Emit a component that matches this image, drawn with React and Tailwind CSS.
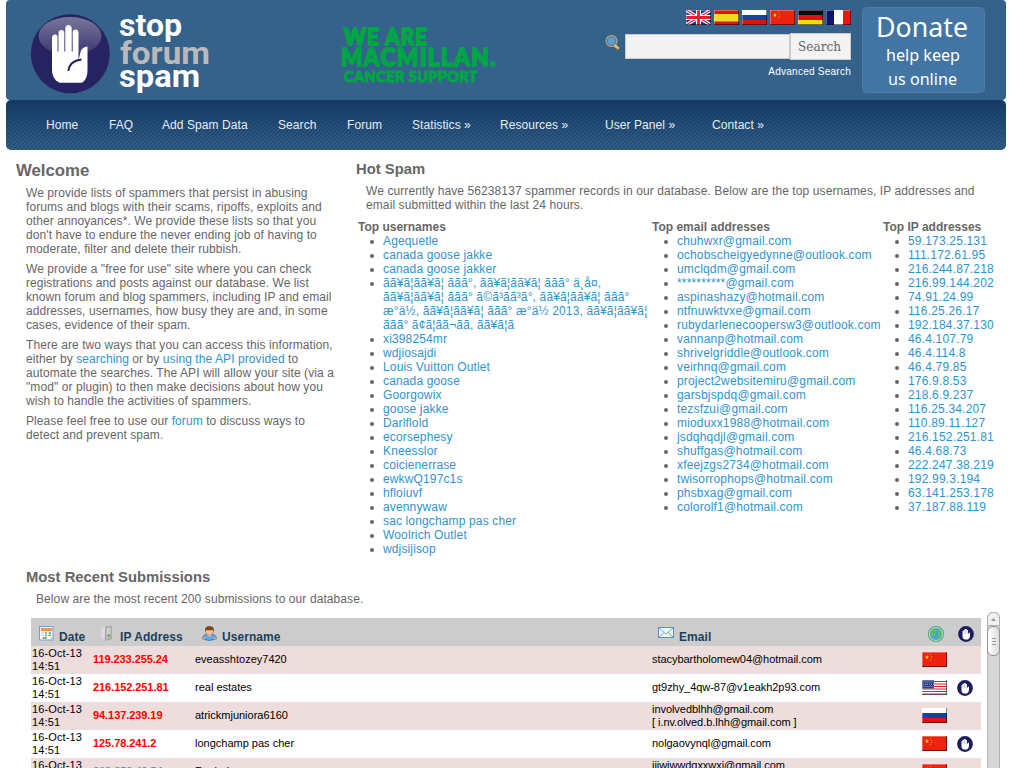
import React from 'react';

const navItems = [
  { label: 'Home', width: 'w-[63px]' },
  { label: 'FAQ', width: 'w-[53px]' },
  { label: 'Add Spam Data', width: 'w-[116px]' },
  { label: 'Search', width: 'w-[69px]' },
  { label: 'Forum', width: 'w-[65px]' },
  { label: 'Statistics »', width: 'w-[88px]' },
  { label: 'Resources »', width: 'w-[105px]' },
  { label: 'User Panel »', width: 'w-[107px]' },
  { label: 'Contact »', width: 'w-[80px]' },
];

const usernames = [
  'Agequetle', 'canada goose jakke', 'canada goose jakker',
  ['ãã¥ã¦ãã¥ã¦ ããã°, ãã¥ã¦ãã¥ã¦ ããã° ä¸å¤,', 'ãã¥ã¦ãã¥ã¦ ããã° ã©ã³ãã³ã°, ãã¥ã¦ãã¥ã¦ ããã°', 'æ°ä½, ãã¥ã¦ãã¥ã¦ ããã° æ°ä½ 2013, ãã¥ã¦ãã¥ã¦', 'ããã° ã¢ã¦ãã¬ãã, ãã¥ã¦ã'],
  'xi398254mr', 'wdjiosajdi', 'Louis Vuitton Outlet', 'canada goose', 'Goorgowix',
  'goose jakke', 'Darlflold', 'ecorsephesy', 'Kneesslor', 'coicienerrase',
  'ewkwQ197c1s', 'hfloiuvf', 'avennywaw', 'sac longchamp pas cher',
  'Woolrich Outlet', 'wdjsijisop',
];

const emails = [
  'chuhwxr@gmail.com', 'ochobscheigyedynne@outlook.com', 'umclqdm@gmail.com',
  '**********@gmail.com', 'aspinashazy@hotmail.com', 'ntfnuwktvxe@gmail.com',
  'rubydarlenecoopersw3@outlook.com', 'vannanp@hotmail.com', 'shrivelgriddle@outlook.com',
  'veirhnq@gmail.com', 'project2websitemiru@gmail.com', 'garsbjspdq@gmail.com',
  'tezsfzui@gmail.com', 'mioduxx1988@hotmail.com', 'jsdqhqdjl@gmail.com',
  'shuffgas@hotmail.com', 'xfeejzgs2734@hotmail.com', 'twisorrophops@hotmail.com',
  'phsbxag@gmail.com', 'colorolf1@hotmail.com',
];

const ips = [
  '59.173.25.131', '111.172.61.95', '216.244.87.218', '216.99.144.202', '74.91.24.99',
  '116.25.26.17', '192.184.37.130', '46.4.107.79', '46.4.114.8', '46.4.79.85',
  '176.9.8.53', '218.6.9.237', '116.25.34.207', '110.89.11.127', '216.152.251.81',
  '46.4.68.73', '222.247.38.219', '192.99.3.194', '63.141.253.178', '37.187.88.119',
];

const submissions = [
  { ip: '119.233.255.24', name: 'eveasshtozey7420', email: ['stacybartholomew04@hotmail.com'], flag: 'cn' },
  { ip: '216.152.251.81', name: 'real estates', email: ['gt9zhy_4qw-87@v1eakh2p93.com'], flag: 'us', hand: true },
  { ip: '94.137.239.19', name: 'atrickmjuniora6160', email: ['involvedblhh@gmail.com', '[ i.nv.olved.b.lhh@gmail.com ]'], flag: 'ru' },
  { ip: '125.78.241.2', name: 'longchamp pas cher', email: ['nolgaovynql@gmail.com'], flag: 'cn', hand: true },
  { ip: '202.252.43.54', name: 'Rachel', email: ['jijwjwwdgxxwxj@gmail.com', '[ jijwjwwdgxxwxj@gmail.com ]'], flag: 'cn', blue: true },
];

const star = '5,3 5.6,4.5 7,4.5 5.9,5.5 6.3,7 5,6.1 3.7,7 4.1,5.5 3,4.5 4.4,4.5';

const flagArt = {
  gb: (
    <>
      <rect width="25" height="15" fill="#26348c" />
      <path d="M0 0 25 15M25 0 0 15" stroke="#fff" strokeWidth="3.4" />
      <path d="M0 0 25 15M25 0 0 15" stroke="#dd2036" strokeWidth="1.2" />
      <path d="M12.5 0V15M0 7.5H25" stroke="#fff" strokeWidth="5" />
      <path d="M12.5 0V15M0 7.5H25" stroke="#e01f30" strokeWidth="2.8" />
    </>
  ),
  es: (
    <>
      <rect width="25" height="15" fill="#dc1414" />
      <rect y="4" width="25" height="7.5" fill="#f0dc1e" />
    </>
  ),
  ru: (
    <>
      <rect width="25" height="15" fill="#fff" />
      <rect y="5" width="25" height="5" fill="#1243a0" />
      <rect y="10" width="25" height="5" fill="#dc1410" />
    </>
  ),
  cn: (
    <>
      <rect width="25" height="15" fill="#ee2211" />
      <polygon points={star} fill="#ffe600" />
      <path d="M8 2.5h1M9 4.5h1M9 6.5h1M8 8.5h1" stroke="#f6b010" strokeOpacity=".7" />
    </>
  ),
  de: (
    <>
      <rect width="25" height="15" fill="#0a0a0a" />
      <rect y="5" width="25" height="5" fill="#e01010" />
      <rect y="10" width="25" height="5" fill="#fadc14" />
    </>
  ),
  fr: (
    <>
      <rect width="25" height="15" fill="#fff" />
      <rect width="8" height="15" fill="#10186e" />
      <rect x="17" width="8" height="15" fill="#f01414" />
    </>
  ),
  us: (
    <>
      <rect width="25" height="15" fill="#fff" />
      <path d="M0 1.5H25M0 4H25M0 6.5H25M0 9H25M0 11.5H25M0 14H25" stroke="#d8202c" strokeWidth="1.2" />
      <rect width="12" height="8.5" fill="#2a3a80" />
      <path d="M1.5 2H12M1 4.3H12M1.5 6.6H12" stroke="#aab4d8" strokeWidth="1" strokeDasharray="1 1" />
    </>
  ),
};

const Flag = ({ code }) => (
  <svg className="w-[25px] h-[15px] block" viewBox="0 0 25 15">
    {flagArt[code]}
    <path d="M0 .5H25M.5 0V15" stroke="#fff" strokeOpacity=".3" />
    <path d="M0 14.5H25M24.5 0V15" stroke="#000" strokeOpacity=".5" />
  </svg>
);

const BigHand = () => (
  <svg className="w-20 h-20 shrink-0" viewBox="0 0 80 80">
    <defs>
      <linearGradient id="gloss" x1="0" y1="0" x2="0" y2="1">
        <stop offset="0" stopColor="#77779b" />
        <stop offset="1" stopColor="#3b3670" />
      </linearGradient>
    </defs>
    <circle cx="40.300" cy="39.700" r="39.500" fill="#272262" />
    <ellipse cx="40" cy="22" rx="31.500" ry="19" fill="url(#gloss)" />
    <path
      d="M22 24q.2-3 2.700-3.400t2.800 2V37.500h1V19q.2-3 2.900-3t2.900 3V37.500h1V14.500q.2-3.500 3.200-3.500t3.200 3.500V37.500h1V18.500q.2-3 2.900-3t2.900 3V46l2-8q1.200-5 7-5.500V56q0 7.500-3.800 11.500l-2 1.300H29.500L26 66.500Q22 62 22 56Z"
      fill="#fff"
    />
    <path d="M51.500 45.500Q39.500 47 38.300 57" fill="none" stroke="#272262" strokeWidth="1.800" />
  </svg>
);

const SmallHand = () => (
  <svg className="w-4 h-4 block" viewBox="0 0 16 16">
    <circle cx="8" cy="8" r="7.900" fill="#1d1d5c" />
    <path d="M4.500 5h1V4h1.200V3h2v1H10v4.500l.8-1.700h1.200V10q-.3 3.200-2 3.400H6.500q-2-.6-2-3Z" fill="#fff" />
    <path d="M6 4.500V8M7.500 4V8M9 4.500V8" stroke="#8a8ab0" strokeWidth=".4" />
  </svg>
);

const Globe = () => (
  <svg className="w-[17px] h-[17px] block" viewBox="0 0 17 17">
    <circle cx="8" cy="8" r="7.500" fill="#4f9fd0" stroke="#5fae68" strokeWidth="1.200" />
    <circle cx="8" cy="8" r="6.500" fill="none" stroke="#c4ecca" strokeWidth=".9" />
    <path d="M3 5 6.500 2.500 9 4 7 6.500 8 8 5.500 10.500 3 9ZM10 4 12.500 4.500 13.500 8.500 11.500 12 9 11.500 10 8.500Z" fill="#58c25c" />
  </svg>
);

const Calendar = () => (
  <svg className="w-[15px] h-[15px]" viewBox="0 0 15 15">
    <rect x=".5" y=".5" width="13.500" height="13.500" fill="#fff" stroke="#6f9fd8" />
    <rect x="2" y="2" width="11" height="3" fill="#f08a3c" />
    <path d="M5 2v3M8 2v3M11 2v3" stroke="#fbc48c" strokeWidth=".6" />
    <path d="M2.500 7h2.500M2.500 9.500h2.500M2.500 12h2.500" stroke="#c3d2ea" strokeWidth="1.600" />
    <path d="M6 7h2M6 9.500h2M9.500 7h2.500M9.500 9.500h2.500" stroke="#62a562" strokeWidth="1.700" />
    <path d="M4 12h4" stroke="#5fa05f" strokeWidth="1.500" />
    <path d="M10 14 14 10V14Z" fill="#a8c8ee" />
  </svg>
);

const Server = () => (
  <svg className="w-[14px] h-[15px]" viewBox="0 0 14 15">
    <path d="M0 3 5 .5V14L0 11.500Z" fill="#dcdcdc" />
    <path d="M4.500 1 10.300.5V13L4.500 14.300Z" fill="#b9b9b9" stroke="#8d8d8d" strokeWidth=".6" />
    <path d="M6 3h3.500M6 5h3.500M6 7h3.500" stroke="#f1f1f1" strokeWidth=".8" />
    <rect x="7.300" y="8.500" width="1.700" height="2" fill="#4eac42" />
  </svg>
);

const UserIcon = () => (
  <svg className="w-[15px] h-[15px]" viewBox="0 0 15 15">
    <path d="M.7 13Q.5 8.500 5 8.500h5q4.500 0 4.300 4.500-6.800 3-13.600 0Z" fill="#62a8ef" stroke="#2b6bc0" strokeWidth=".8" />
    <path d="M5 8.500 7.500 11 10 8.500Z" fill="#cfe6fb" />
    <circle cx="1.800" cy="12.500" r="1.300" fill="#e8a26c" />
    <circle cx="13.200" cy="12.500" r="1.300" fill="#e8a26c" />
    <ellipse cx="7.500" cy="5.500" rx="3.800" ry="4" fill="#f3bf8e" stroke="#a0683c" strokeWidth=".5" />
    <path d="M3 6Q2.300 0 7.500 0T12 6L10.800 3.800Q6 4.800 4.300 3.800Z" fill="#7c4522" />
  </svg>
);

const Mail = () => (
  <svg className="w-4 h-[11px]" viewBox="0 0 16 11">
    <rect x=".5" y=".5" width="15" height="10" fill="#eef6fe" stroke="#5b8dc8" />
    <path d="M1 1 8 7 15 1M1 10 6 5.500M15 10 10 5.500" fill="none" stroke="#7ba5d8" />
  </svg>
);

const SearchGlass = () => (
  <svg className="w-[15px] h-[15px] mt-0.5 mr-[5px] shrink-0" viewBox="0 0 15 15">
    <path d="M9.500 10 13.500 14" stroke="#edbf70" strokeWidth="3" />
    <path d="M10.500 13 13 15" stroke="#a06a32" strokeWidth="1.200" />
    <circle cx="6.500" cy="6" r="5.300" fill="#659bd0" stroke="#c8a878" strokeWidth="1.400" />
    <circle cx="6.500" cy="6" r="4.400" fill="none" stroke="#365d88" strokeWidth=".7" />
  </svg>
);

const TopList = ({ title, items, className }) => (
  <div className={className}>
    <h3 className="font-bold tracking-normal">{title}</h3>
    <ul className="list-disc pl-[26px]">
      {items.map((item, i) => (
        <li key={i} className="whitespace-nowrap">
          <a href="#" className="inline-block align-top -ml-px text-[#2e94cf]">
            {Array.isArray(item)
              ? item.map((line, n) => <span key={n} className="block">{line}</span>)
              : item}
          </a>
        </li>
      ))}
    </ul>
  </div>
);

const Header = () => (
  <header className="flex h-[100px] bg-[#35628b] rounded-[4px]">
    <div className="flex w-[330px] pl-6 pt-[14px]">
      <BigHand />
      <svg className="w-[100px] h-[86px] ml-1" viewBox="0 0 100 86">
        <g fontFamily="Roboto, 'Liberation Sans', sans-serif" fontWeight="700" fontSize="31">
          <text x="5" y="22" fill="#fff" textLength="63" lengthAdjust="spacingAndGlyphs">stop</text>
          <text x="6" y="49.500" fill="#b9b9bb" textLength="90" lengthAdjust="spacingAndGlyphs">forum</text>
          <text x="5" y="73" fill="#fff" textLength="81" lengthAdjust="spacingAndGlyphs">spam</text>
        </g>
      </svg>
    </div>
    <div className="w-[269px] pt-5">
      <svg className="w-[170px] h-[70px]" viewBox="0 0 170 70">
        <g
          fill="#00a546"
          stroke="#00a546"
          strokeLinejoin="round"
          strokeLinecap="round"
          fontFamily="Lato, 'Open Sans', sans-serif"
          fontWeight="700"
        >
          <text x="8" y="24.500" fontSize="22" strokeWidth="2" letterSpacing="1" textLength="84" lengthAdjust="spacingAndGlyphs">WE ARE</text>
          <text x="5" y="46" fontSize="24" strokeWidth="2" letterSpacing="1.500" textLength="156" lengthAdjust="spacingAndGlyphs">MACMILLAN.</text>
          <text x="8" y="61.500" fontSize="15" strokeWidth="1.200" letterSpacing=".5" textLength="134" lengthAdjust="spacingAndGlyphs">CANCER SUPPORT</text>
        </g>
      </svg>
    </div>
    <div className="w-[246px] pt-[10px] flex flex-col items-end">
      <div className="flex gap-[3px]">
        {['gb', 'es', 'ru', 'cn', 'de', 'fr'].map((code) => <Flag key={code} code={code} />)}
      </div>
      <form className="flex mt-2 items-start">
        <SearchGlass />
        <div className="flex items-center pt-px">
          <input type="text" className="w-[165px] h-[25px] bg-[#f3f3f3] border border-[#ccc] outline-none" />
        </div>
        <button type="button" className="w-[61px] h-[27px] bg-[#f3f3f3] border border-[#ccc]">
          <svg className="w-full h-full font-['DejaVu_Serif',serif]" viewBox="0 0 59 25">
            <text x="7" y="17" fill="#666" fontSize="12.500" textLength="43" lengthAdjust="spacingAndGlyphs">Search</text>
          </svg>
        </button>
      </form>
      <a href="#" className="text-[10px] text-white leading-[12px] mt-1.5 tracking-[0.25px]">Advanced Search</a>
    </div>
    <svg className="w-[123px] h-[86px] mt-[7px] ml-[11px]" viewBox="0 0 123 86">
      <rect x=".5" y=".5" width="122" height="85" rx="4" fill="#4274a4" stroke="#4b7caa" />
      <g fill="#fff" fontFamily="'Noto Sans', 'Open Sans', sans-serif">
        <text x="14" y="30" fontSize="28" textLength="92" lengthAdjust="spacingAndGlyphs">Donate</text>
        <text x="24" y="54" fontSize="17" textLength="74" lengthAdjust="spacingAndGlyphs">help keep</text>
        <text x="26" y="78" fontSize="17" textLength="69" lengthAdjust="spacingAndGlyphs">us online</text>
      </g>
    </svg>
  </header>
);

const Nav = () => (
  <nav className="h-[50px] rounded-[5px] pl-10 flex items-center tracking-[0.07px] text-[#e4edf4] bg-[repeating-linear-gradient(135deg,rgba(0,15,45,0.22)_0px_1.414px,transparent_1.414px_2.828px),linear-gradient(#163f6b,#34628c)]">
    {navItems.map((item) => (
      <a key={item.label} href="#" className={`${item.width} shrink-0 whitespace-nowrap`}>{item.label}</a>
    ))}
  </nav>
);

const Welcome = () => (
  <section className="w-[350px] pl-[10px] pt-[11px]">
    <h2 className="text-[16.8px] leading-5 font-bold">Welcome</h2>
    <div className="pl-[10px] pt-[5px] flex flex-col gap-1.5 whitespace-nowrap tracking-[0.08px]">
      <p>
        We provide lists of spammers that persist in abusing<br />
        forums and blogs with their scams, ripoffs, exploits and<br />
        other annoyances*. We provide these lists so that you<br />
        don't have to endure the never ending job of having to<br />
        moderate, filter and delete their rubbish.
      </p>
      <p>
        We provide a "free for use" site where you can check<br />
        registrations and posts against our database. We list<br />
        known forum and blog spammers, including IP and email<br />
        addresses, usernames, how busy they are and, in some<br />
        cases, evidence of their spam.
      </p>
      <p>
        There are two ways that you can access this information,<br />
        either by <a href="#" className="text-[#2e94cf]">searching</a> or by <a href="#" className="text-[#2e94cf]">using the API provided</a> to<br />
        automate the searches. The API will allow your site (via a<br />
        "mod" or plugin) to then make decisions about how you<br />
        wish to handle the activities of spammers.
      </p>
      <p>
        Please feel free to use our <a href="#" className="text-[#2e94cf]">forum</a> to discuss ways to<br />
        detect and prevent spam.
      </p>
    </div>
  </section>
);

const HotSpam = () => (
  <section className="flex-1 pt-[10px]">
    <h2 className="text-[14.8px] leading-[18px] font-bold">Hot Spam</h2>
    <p className="pl-[10px] pt-1.5 whitespace-nowrap tracking-[0.095px]">
      We currently have 56238137 spammer records in our database. Below are the top usernames, IP addresses and<br />
      email submitted within the last 24 hours.
    </p>
    <div className="flex pl-0.5 pt-2">
      <TopList title="Top usernames" items={usernames} className="w-[294px] tracking-[0.14px]" />
      <TopList title="Top email addresses" items={emails} className="w-[231px] tracking-[0.17px]" />
      <TopList title="Top IP addresses" items={ips} className="w-[120px] tracking-[0.18px]" />
    </div>
  </section>
);

const Scrollbar = () => (
  <div className="w-[13px] bg-[#d6d6d6] border-x border-[#b5b5b5] rounded-t-md">
    <div className="-mx-px h-[14px] rounded-t-md border border-[#b0b0b0] bg-[#f0f0f0] flex justify-center items-center">
      <svg className="w-[5px] h-[3px]" viewBox="0 0 5 3"><path d="M0 3 2.500 0 5 3Z" fill="#999" /></svg>
    </div>
    <div className="-mx-px h-[30px] rounded-[6px] border border-[#929292] bg-gradient-to-r from-white to-[#dedede] flex flex-col items-center justify-center gap-0.5">
      <i className="w-1 h-px bg-[#999]" />
      <i className="w-1 h-px bg-[#999]" />
      <i className="w-1 h-px bg-[#999]" />
    </div>
  </div>
);

const Recent = () => (
  <section className="pl-5 pt-[13px]">
    <h2 className="text-[14.8px] leading-[17px] font-bold">Most Recent Submissions</h2>
    <p className="pl-[10px] pt-1.5 tracking-[0.09px]">Below are the most recent 200 submissions to our database.</p>
    <div className="flex h-[220px] mt-1.5 pl-[5px] text-black text-[11px] leading-[13px]">
      <div className="w-[950px] mr-1.5 mt-1.5">
        <div className="grid grid-cols-[62px_102px_457px_270px_35px_24px] h-7 bg-[#ccc] text-[#1b405e] text-[12px] leading-[14px] font-bold tracking-[0.06px]">
          <div className="flex pl-2 pt-2 gap-[5px]"><Calendar /><span className="pt-1">Date</span></div>
          <div className="flex pl-2 pt-2 gap-[5px]"><Server /><span className="pt-1 whitespace-nowrap">IP Address</span></div>
          <div className="flex pl-[7px] pt-2 gap-[5px]"><UserIcon /><span className="pt-1">Username</span></div>
          <div className="flex pl-1.5 pt-[9px] gap-[5px]"><Mail /><span className="pt-[3px]">Email</span></div>
          <div className="pt-2 pl-1.5"><Globe /></div>
          <div className="pt-2 pl-px"><SmallHand /></div>
        </div>
        {submissions.map((row, i) => (
          <div
            key={row.ip}
            className={`grid grid-cols-[62px_102px_457px_270px_35px_24px] items-start h-7 ${i % 2 ? 'bg-white' : 'bg-[#eddddc]'}`}
          >
            <div className="pl-px pt-px tracking-[0.12px]">16-Oct-13<br />14:51</div>
            <div className={`pt-[7px] font-bold tracking-[-0.07px] ${row.blue ? 'text-[#4d9dc8]' : 'text-[#f00]'}`}>{row.ip}</div>
            <div className="pt-[7px]">{row.name}</div>
            <div className={`tracking-[-0.05px] ${row.email.length > 1 ? 'pt-px' : 'pt-[7px]'}`}>
              {row.email.map((line) => <div key={line}>{line}</div>)}
            </div>
            <div className="pt-1.5"><Flag code={row.flag} /></div>
            {row.hand && <div className="pt-1.5"><SmallHand /></div>}
          </div>
        ))}
      </div>
      <Scrollbar />
    </div>
  </section>
);

const App = () => {
  return (
    <div className="h-[768px] overflow-hidden bg-white text-[#666] text-[12px] leading-[14px] font-['Liberation_Sans',Arial,sans-serif]">
      <div className="w-[1000px] ml-1.5">
        <Header />
        <Nav />
        <main className="flex">
          <Welcome />
          <HotSpam />
        </main>
        <Recent />
      </div>
    </div>
  );
};

export default App;
